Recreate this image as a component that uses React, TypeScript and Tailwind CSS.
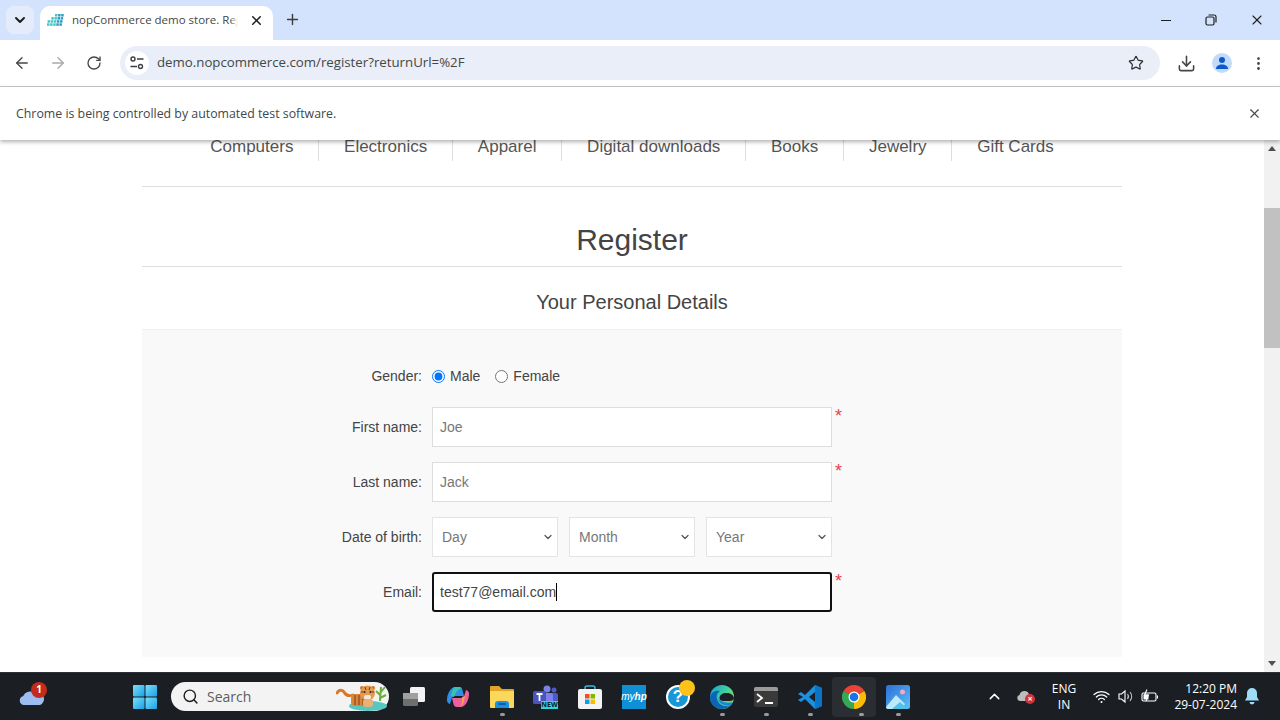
import { ArrowLeft, ArrowRight, ChevronDown, ChevronUp, Download, MoreVertical, Plus, RotateCw, Search, Star, X } from "lucide-react";

const NAV_ITEMS = ["Computers", "Electronics", "Apparel", "Digital downloads", "Books", "Jewelry", "Gift Cards"];

function Favicon() {
  const dots = [];
  for (let row = 0; row < 4; row++) {
    for (let col = 0; col < 5; col++) {
      if (row === 0 && col < 2) continue;
      if (row === 1 && col < 1) continue;
      dots.push(<rect key={`${row}-${col}`} x={col * 3.1 + (3 - row) * 0.6} y={row * 3.1 + 1} width="2.5" height="2.5" fill={col > 2 ? "#2f9cc4" : "#45c6c6"} />);
    }
  }
  return <svg width="17" height="15" viewBox="0 0 17 15">{dots}</svg>;
}

function SiteIcon() {
  return (
    <svg width="16" height="16" viewBox="0 0 16 16" fill="none" stroke="#3c4043" strokeWidth="1.4">
      <circle cx="4" cy="4" r="2" />
      <path d="M8 4h6.5M1.5 11.5H8" />
      <circle cx="11.5" cy="11.5" r="2" />
    </svg>
  );
}

function RestoreIcon() {
  return (
    <svg width="12" height="12" viewBox="0 0 12 12" fill="none" stroke="#1f1f1f" strokeWidth="1.2">
      <rect x="1" y="3" width="8" height="8" rx="1.5" />
      <path d="M3.5 1h5.5a2 2 0 0 1 2 2v5.5" />
    </svg>
  );
}

function ProfileIcon() {
  return (
    <div className="w-5 h-5 rounded-full bg-[#c2dbfb] flex items-center justify-center">
      <svg width="14" height="14" viewBox="0 0 14 14" fill="#0b57d0">
        <circle cx="7" cy="4" r="3" />
        <path d="M1 13c0-3 2.600-4.500 6-4.500s6 1.500 6 4.500z" />
      </svg>
    </div>
  );
}

function WeatherIcon() {
  return (
    <div className="relative w-[26px] h-[18px]">
      <svg width="26" height="18" viewBox="0 0 26 18">
        <path d="M5 17a4.500 4.500 0 0 1-1-8.800A8 8 0 0 1 16 5a6 6 0 0 1 5 12z" fill="#9dbcf0" />
      </svg>
      <div className="absolute -top-[6px] left-[12px] w-[16px] h-[16px] rounded-full bg-[#c42b1c] text-white text-[10px] font-bold flex items-center justify-center font-['Open_Sans',sans-serif]">1</div>
    </div>
  );
}

function WindowsLogo() {
  return (
    <svg width="24" height="24" viewBox="0 0 24 24">
      <defs>
        <linearGradient id="winA" x1="0" y1="0" x2="1" y2="1">
          <stop offset="0" stopColor="#7be0f6" />
          <stop offset="1" stopColor="#1aa0e8" />
        </linearGradient>
      </defs>
      <rect x="0" y="0" width="11.500" height="11.500" rx="1" fill="url(#winA)" />
      <rect x="12.500" y="0" width="11.500" height="11.500" rx="1" fill="url(#winA)" />
      <rect x="0" y="12.500" width="11.500" height="11.500" rx="1" fill="url(#winA)" />
      <rect x="12.500" y="12.500" width="11.500" height="11.500" rx="1" fill="url(#winA)" />
    </svg>
  );
}

function TigerIcon() {
  return (
    <svg width="52" height="28" viewBox="0 0 52 28">
      <ellipse cx="32" cy="23" rx="19" ry="5" fill="#55c8c0" />
      <path d="M1 10c2-4 6-3 7-1s3 5 9 3" fill="none" stroke="#d9772b" strokeWidth="2.800" strokeLinecap="round" />
      <rect x="15" y="11" width="17" height="12" rx="4" fill="#d9853b" />
      <path d="M19 12v10M23 12v10M27 12v10" stroke="#7a3f18" strokeWidth="1" />
      <circle cx="26" cy="5" r="2" fill="#c9742d" />
      <circle cx="37" cy="5" r="2" fill="#c9742d" />
      <circle cx="31.500" cy="10" r="7.500" fill="#e3994f" />
      <path d="M29 4l1 3M34 4l-1 3M25 9h2M36 9h2" stroke="#6b3a18" strokeWidth="1" />
      <rect x="28" y="12" width="7" height="4.500" rx="2" fill="#f6e7d3" />
      <circle cx="28.500" cy="9" r="1" fill="#222" />
      <circle cx="34.500" cy="9" r="1" fill="#222" />
      <rect x="27" y="16" width="10" height="8" rx="3" fill="#e9b077" />
      <path d="M44 18c0-5 1-10 1-14M44 12l-4-4M45 9l4-5M44 15l6-3" stroke="#6fae3c" strokeWidth="2" fill="none" />
    </svg>
  );
}

function TaskViewIcon() {
  return (
    <svg width="24" height="24" viewBox="0 0 24 24">
      <rect x="8" y="2" width="15" height="15" rx="1.500" fill="#f2f2f2" />
      <rect x="1" y="8" width="15" height="13" rx="1.500" fill="#6f6f6f" />
      <rect x="1" y="8" width="15" height="6" fill="#a0a0a0" />
    </svg>
  );
}

function CopilotIcon() {
  return (
    <svg width="24" height="24" viewBox="0 0 24 24">
      <path d="M9 2h4c2 0 3 1 3.500 3L18 11H9c-2 0-3 1-3.500 3l-1.500 5c-2-.500-3-2-3-4 0-5 3-13 8.500-13z" fill="#2f8fe8" />
      <path d="M9 2h4c1 0 2 .300 2.800 1.200C12 4 10 7 8 12L5 11c1-4 2-9 4-9z" fill="#37c4a8" />
      <path d="M15 22h-4c-2 0-3-1-3.500-3L6 13h9c2 0 3-1 3.500-3l1.500-5c2 .500 3 2 3 4 0 5-3 13-8.500 13z" fill="#ec5fa0" />
      <path d="M16 12l3-1-1 5c-.500 2-2 5-4 6 2-2 2-7 2-10z" fill="#f5a14a" />
    </svg>
  );
}

function ExplorerIcon() {
  return (
    <svg width="24" height="24" viewBox="0 0 24 24">
      <path d="M0 2a1 1 0 0 1 1-1h8l3 3h11a1 1 0 0 1 1 1v4H0z" fill="#e0a526" />
      <path d="M0 6h24v16a1 1 0 0 1-1 1H1a1 1 0 0 1-1-1z" fill="#fbd75b" />
      <path d="M5 23v-4a3 3 0 0 1 3-3h8a3 3 0 0 1 3 3v4z" fill="#1c8fe0" />
      <rect x="8" y="18" width="8" height="2" rx="1" fill="#0a5ea8" />
    </svg>
  );
}

function TeamsIcon() {
  return (
    <div className="relative w-[26px] h-[24px]">
      <svg width="26" height="24" viewBox="0 0 26 24">
        <circle cx="14" cy="4" r="3.500" fill="#7b83eb" />
        <circle cx="21" cy="5" r="2.500" fill="#5059c9" />
        <rect x="14" y="8" width="11" height="11" rx="2" fill="#5059c9" />
        <rect x="10" y="8" width="10" height="12" rx="2" fill="#7b83eb" />
        <rect x="0" y="6" width="13" height="13" rx="1.500" fill="#4b53bc" />
        <path d="M3.500 9h6M6.500 9v7" stroke="#fff" strokeWidth="1.800" />
      </svg>
      <div className="absolute left-[8px] top-[16px] w-[17px] h-[8px] bg-[#33d6d6] text-[#10202a] text-[7px] leading-[8px] font-bold text-center font-['Open_Sans',sans-serif]">NEW</div>
    </div>
  );
}

function StoreIcon() {
  return (
    <svg width="24" height="24" viewBox="0 0 24 24">
      <path d="M7 5V3a2 2 0 0 1 2-2h6a2 2 0 0 1 2 2v2" fill="none" stroke="#3db5d8" strokeWidth="1.500" />
      <rect x="0" y="4" width="24" height="20" rx="2" fill="#f3f3f3" />
      <rect x="7" y="9" width="4.500" height="4.500" fill="#f25022" />
      <rect x="12.500" y="9" width="4.500" height="4.500" fill="#7fba00" />
      <rect x="7" y="14.500" width="4.500" height="4.500" fill="#00a4ef" />
      <rect x="12.500" y="14.500" width="4.500" height="4.500" fill="#ffb900" />
    </svg>
  );
}

function MyHpIcon() {
  return (
    <div className="w-[24px] h-[24px] bg-[#0f8fd6] flex items-center justify-center text-white text-[10px] italic font-['Liberation_Sans',sans-serif]">
      my<span className="font-bold">hp</span>
    </div>
  );
}

function HelpIcon() {
  return (
    <div className="relative w-[24px] h-[24px]">
      <div className="w-[24px] h-[24px] rounded-full bg-[#1797d8] border-2 border-white flex items-center justify-center text-white text-[17px] font-bold font-['Liberation_Sans',sans-serif]">?</div>
      <div className="absolute -top-[5px] left-[13px] w-[16px] h-[16px] rounded-full bg-[#fcc21b]" />
    </div>
  );
}

function EdgeIcon() {
  return (
    <svg width="24" height="24" viewBox="0 0 24 24">
      <defs>
        <linearGradient id="edgeA" x1="0" y1="0" x2="1" y2="0.6">
          <stop offset="0" stopColor="#1a9fd0" />
          <stop offset="0.6" stopColor="#3fd0a0" />
          <stop offset="1" stopColor="#86e05a" />
        </linearGradient>
      </defs>
      <circle cx="12" cy="12" r="12" fill="url(#edgeA)" />
      <path d="M0 12C1 7 6 5 10 6c-3 2-4 5-3 8 1 5 6 8 13 7a12 12 0 0 1-8 3A12 12 0 0 1 0 12z" fill="#0c63b8" />
      <path d="M9.500 13c0-3 3-5 7-5 4 0 7 2 7.500 5 0 2-2 3-4 3h-7c-2 0-3.500-1-3.500-3z" fill="#1b1f24" />
      <path d="M8 14c1 4 5 7 12 7 1-1 2-3 3-4-3 1-9 1-12-1-2-1-2-2-3-2z" fill="#1a86d8" />
    </svg>
  );
}

function TerminalIcon() {
  return (
    <div className="w-[24px] h-[20px] bg-[#3a3a3a] rounded-[2px] flex flex-col">
      <div className="h-[4px] bg-[#9a9a9a] rounded-t-[2px]" />
      <svg width="24" height="16" viewBox="0 0 24 16" fill="none" stroke="#fff" strokeWidth="1.800">
        <path d="M3 3l5 4-5 4M11 12h8" />
      </svg>
    </div>
  );
}

function VsCodeIcon() {
  return (
    <svg width="24" height="24" viewBox="0 0 24 24">
      <path d="M17 0l7 3v18l-7 3-10-10-4 3-3-2 5-3-5-3 3-2 4 3z" fill="#1e8fe0" />
      <path d="M17 0l7 3v18l-7 3z" fill="#0a74c9" />
      <path d="M17 7l-6 5 6 5z" fill="#1b1f24" />
    </svg>
  );
}

function ChromeIcon() {
  return (
    <svg width="24" height="24" viewBox="0 0 24 24">
      <path d="M12 12L1.600 6A12 12 0 0 1 22.400 6z" fill="#ea4335" />
      <path d="M12 12L22.400 6A12 12 0 0 1 12 24z" fill="#fbbc04" />
      <path d="M12 12L12 24A12 12 0 0 1 1.600 6z" fill="#34a853" />
      <circle cx="12" cy="12" r="5.500" fill="#fff" />
      <circle cx="12" cy="12" r="4.300" fill="#1a73e8" />
    </svg>
  );
}

function PhotosIcon() {
  return (
    <svg width="24" height="24" viewBox="0 0 24 24">
      <defs>
        <linearGradient id="photosA" x1="0" y1="0" x2="1" y2="1">
          <stop offset="0" stopColor="#2b6fd8" />
          <stop offset="1" stopColor="#5fc0f5" />
        </linearGradient>
      </defs>
      <rect width="24" height="24" rx="2.500" fill="url(#photosA)" />
      <circle cx="16.500" cy="7" r="2.500" fill="#f4a6c8" />
      <path d="M0 22L10 10l9 9-3 5H2a2 2 0 0 1-2-2z" fill="#bdeafc" />
      <path d="M6 24l8-7 8 7z" fill="#4fc3e8" />
    </svg>
  );
}

function WifiIcon() {
  return (
    <svg width="17" height="15" viewBox="0 0 17 15" fill="none" stroke="#fff" strokeWidth="1.200" strokeLinecap="round">
      <path d="M1 5.500a11 11 0 0 1 15 0M3.300 8a7.500 7.500 0 0 1 10.400 0M5.600 10.500a4 4 0 0 1 5.800 0" />
      <circle cx="8.500" cy="13" r="1" fill="#fff" stroke="none" />
    </svg>
  );
}

function SpeakerIcon() {
  return (
    <svg width="16" height="15" viewBox="0 0 16 15" fill="none" stroke="#fff" strokeWidth="1.100">
      <path d="M1 5h2.500L7 2v11L3.500 10H1z" />
      <path d="M9.500 5a4 4 0 0 1 0 5M12 3a7 7 0 0 1 0 9" stroke="#c9c9c9" />
    </svg>
  );
}

function BatteryIcon() {
  return (
    <svg width="18" height="15" viewBox="0 0 18 15" fill="none" stroke="#fff" strokeWidth="1.100">
      <rect x="1" y="4" width="14" height="8" rx="1.500" />
      <path d="M16.500 6.500v3" />
      <path d="M2.500 5.500h5v5h-5z" fill="#fff" stroke="none" />
      <path d="M6 0.500L3.500 6h4L5 12" stroke="#fff" />
    </svg>
  );
}

function BellIcon() {
  return (
    <svg width="14" height="17" viewBox="0 0 14 17" fill="#9fdcf7">
      <path d="M7 0a5 5 0 0 1 5 5v4l2 3.500H0L2 9V5a5 5 0 0 1 5-5z" />
      <path d="M4.500 14a2.500 2.500 0 0 0 5 0z" />
    </svg>
  );
}

function OneDriveIcon() {
  return (
    <div className="relative w-[18px] h-[14px]">
      <svg width="16" height="11" viewBox="0 0 16 11">
        <path d="M3 11a3 3 0 0 1-.500-5.900A5 5 0 0 1 12 4a3.500 3.500 0 0 1 0 7z" fill="#bdbdbd" />
      </svg>
      <div className="absolute left-[8px] top-[4px] w-[10px] h-[10px] rounded-full bg-[#d13438] text-white text-[9px] leading-[10px] text-center font-bold">×</div>
    </div>
  );
}

function ScrollArrow({ down }: { down?: boolean }) {
  return (
    <svg width="8" height="5" viewBox="0 0 8 5" fill="#505050">
      <path d={down ? "M0 0h8L4 5z" : "M4 0l4 5H0z"} />
    </svg>
  );
}

function TaskCell({ children, dot, active }: { children: React.ReactNode; dot?: boolean; active?: boolean }) {
  return (
    <div className={`relative w-[44px] h-[40px] flex items-center justify-center rounded-[4px] ${active ? "bg-[#2a2e33]" : ""}`}>
      {children}
      {dot && <div className={`absolute bottom-[1px] h-[3px] w-[5px] rounded-full bg-[#9a9a9a] ${active ? "left-[27px]" : "left-[20px]"}`} />}
    </div>
  );
}

function Field({ label, value, required }: { label: string; value: string; required?: boolean }) {
  return (
    <div className="flex items-center gap-[10px] mb-[15px] h-[40px]">
      <label className="w-[280px] text-right text-sm text-[#444]">{label}</label>
      <input readOnly value={value} className="w-[400px] h-[40px] pl-[7px] pr-2 border border-[#dddddd] bg-white text-sm text-[#777] outline-none" />
      {required && <span className="self-start -ml-[7px] -mt-[1px] text-[18px] leading-[20px] text-[#e4434b]">*</span>}
    </div>
  );
}

export default function App() {
  return (
    <div className="w-[1280px] h-[720px] overflow-hidden flex flex-col bg-white font-['Liberation_Sans',sans-serif]">
      {/* browser chrome */}
      <div className="h-[40px] bg-[#d3e3fd] flex items-end relative font-['Open_Sans',sans-serif]">
        <div className="absolute left-[6px] top-[6px] w-[28px] h-[28px] rounded-lg bg-[#e4ecfb] flex items-center justify-center">
          <ChevronDown size={16} strokeWidth={3} className="text-[#1f1f1f]" />
        </div>
        <div className="ml-[40px] w-[233px] h-[34px] rounded-t-[10px] bg-white flex items-center pl-[7px] pb-[6px]">
          <Favicon />
          <div className="relative ml-[8px] w-[166px] overflow-hidden whitespace-nowrap text-[11.5px] text-[#444746]">
            nopCommerce demo store. Reg
            <div className="absolute right-0 top-0 bottom-0 w-[8px] bg-gradient-to-r from-transparent to-white" />
          </div>
          <X size={15} strokeWidth={2.5} className="ml-[11px] text-[#1f1f1f]" />
        </div>
        <Plus size={17} strokeWidth={2} className="ml-[11px] mb-[12px] text-[#3c3c3c]" />
        <div className="ml-auto h-[40px] flex items-center text-[#1f1f1f]">
          <div className="w-[45px] flex justify-center"><div className="w-[10px] h-[1px] bg-[#1f1f1f]" /></div>
          <div className="w-[46px] flex justify-center"><RestoreIcon /></div>
          <div className="w-[46px] flex justify-center"><X size={16} strokeWidth={1.6} /></div>
        </div>
      </div>
      <div className="h-[47px] bg-white rounded-t-[10px] border-b border-[#c7c7c7] flex items-center px-[4px] font-['Open_Sans',sans-serif]">
        <div className="w-[36px] flex justify-center"><ArrowLeft size={18} strokeWidth={1.8} className="text-[#474747]" /></div>
        <div className="w-[36px] flex justify-center"><ArrowRight size={18} strokeWidth={1.8} className="text-[#a9a9a9]" /></div>
        <div className="w-[36px] flex justify-center"><RotateCw size={16} strokeWidth={2} className="text-[#474747]" /></div>
        <div className="ml-[8px] w-[1040px] h-[34px] rounded-full bg-[#e9eef8] flex items-center pl-[5px] pr-[16px]">
          <div className="w-[24px] h-[24px] rounded-full bg-white flex items-center justify-center"><SiteIcon /></div>
          <span className="ml-[8px] text-[13.25px] text-[#444746]">demo.nopcommerce.com/register?returnUrl=%2F</span>
          <Star size={16} strokeWidth={1.8} className="ml-auto text-[#303030]" />
        </div>
        <div className="ml-[8px] w-[36px] flex justify-center"><Download size={19} strokeWidth={2} className="text-[#474747]" /></div>
        <div className="w-[36px] flex justify-center"><ProfileIcon /></div>
        <div className="w-[36px] flex justify-center"><MoreVertical size={17} strokeWidth={2} className="text-[#474747]" /></div>
      </div>
      <div className="relative z-10 h-[53px] bg-white shadow-[0_2px_4px_rgba(0,0,0,0.3)] flex items-center justify-between pl-[16px] pr-[18px] font-['Open_Sans',sans-serif]">
        <span className="pt-[2px] text-[12.35px] text-[#444746]">Chrome is being controlled by automated test software.</span>
        <X size={15} strokeWidth={1.8} className="text-[#474747]" />
      </div>

      {/* page */}
      <div className="h-[532px] flex overflow-hidden">
        <div className="flex-1 flex flex-col items-center">
          <div className="w-[980px] -mt-[4px] flex flex-col">
            <ul className="h-[51px] border-b border-[#dddddd] flex justify-center items-start">
              {NAV_ITEMS.map((item, i) => (
                <li key={item} className={`px-[24.83px] h-[25px] leading-[22px] text-[17px] text-[#555] ${i < NAV_ITEMS.length - 1 ? "border-r border-[#dddddd]" : ""}`}>{item}</li>
              ))}
            </ul>
            <h1 className="h-[80px] pt-[33px] text-center text-[30px] leading-[40px] text-[#444] border-b border-[#dddddd]">Register</h1>
            <h2 className="h-[63px] pt-[21px] text-center text-xl leading-[28px] text-[#444] border-b border-[#f0f0f0]">Your Personal Details</h2>
            <form className="h-[327px] bg-[#f9f9f9]">
              <div className="flex items-center gap-[10px] h-[77px] pt-[15px]">
                <label className="w-[280px] text-right text-sm text-[#444]">Gender:</label>
                <input type="radio" name="gender" defaultChecked className="w-[13px] h-[13px] m-0" />
                <span className="-ml-[5px] text-sm text-[#444]">Male</span>
                <input type="radio" name="gender" className="ml-[5px] w-[13px] h-[13px] m-0" />
                <span className="-ml-[5px] text-sm text-[#444]">Female</span>
              </div>
              <Field label="First name:" value="Joe" required />
              <Field label="Last name:" value="Jack" required />
              <div className="flex items-center gap-[10px] mb-[15px] h-[40px]">
                <label className="w-[280px] text-right text-sm text-[#444]">Date of birth:</label>
                <div className="w-[400px] flex justify-between">
                  {["Day", "Month", "Year"].map((v) => (
                    <div key={v} className="relative w-[126px] h-[40px]">
                      <select defaultValue={v} className="appearance-none w-full h-full pl-[9px] border border-[#e4e4e4] bg-white text-sm text-[#777] outline-none">
                        <option>{v}</option>
                      </select>
                      <ChevronDown size={12} strokeWidth={2.5} className="absolute right-[4px] top-[14px] text-[#555]" />
                    </div>
                  ))}
                </div>
              </div>
              <div className="flex items-center gap-[10px] h-[40px]">
                <label className="w-[280px] text-right text-sm text-[#444]">Email:</label>
                <div className="relative">
                  <input readOnly value="test77@email.com" className="w-[400px] h-[40px] px-[6px] border-2 border-[#101010] rounded-[3px] bg-white text-sm text-[#444] outline-none" />
                  <div className="absolute left-[124px] top-[11px] w-[1px] h-[18px] bg-black" />
                </div>
                <span className="self-start -ml-[7px] -mt-[1px] text-[18px] leading-[20px] text-[#e4434b]">*</span>
              </div>
            </form>
          </div>
        </div>
        <div className="w-[16px] bg-[#f1f1f1] flex flex-col items-center relative">
          <div className="absolute top-[6px]"><ScrollArrow /></div>
          <div className="mt-[68px] w-full h-[140px] bg-[#c1c1c1]" />
          <div className="absolute bottom-[6px]"><ScrollArrow down /></div>
        </div>
      </div>

      {/* taskbar */}
      <div className="h-[48px] bg-[#1b1f24] border-t border-[#2d3136] flex items-center text-white font-['Open_Sans',sans-serif]">
        <div className="ml-[19px] w-[26px]"><WeatherIcon /></div>
        <div className="ml-[88px] w-[24px] flex"><WindowsLogo /></div>
        <div className="ml-[14px] w-[218px] h-[29px] rounded-full bg-[#f3f3f3] flex items-center pl-[11px] pr-[1px]">
          <Search size={17} strokeWidth={2} className="text-[#1f1f1f]" />
          <span className="ml-[8px] text-sm text-[#5d5d5d]">Search</span>
          <div className="ml-auto flex"><TigerIcon /></div>
        </div>
        <div className="ml-[3px] flex items-center">
          <TaskCell><TaskViewIcon /></TaskCell>
          <TaskCell><CopilotIcon /></TaskCell>
          <TaskCell dot><ExplorerIcon /></TaskCell>
          <TaskCell><TeamsIcon /></TaskCell>
          <TaskCell><StoreIcon /></TaskCell>
          <TaskCell><MyHpIcon /></TaskCell>
          <TaskCell><HelpIcon /></TaskCell>
          <TaskCell dot><EdgeIcon /></TaskCell>
          <TaskCell dot><TerminalIcon /></TaskCell>
          <TaskCell dot><VsCodeIcon /></TaskCell>
          <TaskCell dot active><ChromeIcon /></TaskCell>
          <TaskCell dot><PhotosIcon /></TaskCell>
        </div>
        <ChevronUp size={17} strokeWidth={2} className="ml-[66px]" />
        <div className="ml-[14px]"><OneDriveIcon /></div>
        <div className="ml-[16px] w-[26px] text-center text-xs leading-[16px]">ENG<br />IN</div>
        <div className="ml-[16px]"><WifiIcon /></div>
        <div className="ml-[8px]"><SpeakerIcon /></div>
        <div className="ml-[7px]"><BatteryIcon /></div>
        <div className="ml-[16px] w-[62px] text-right text-xs leading-[16px] whitespace-nowrap flex flex-col items-end">
          <span>12:20 PM</span>
          <span>29-07-2024</span>
        </div>
        <div className="ml-[8px]"><BellIcon /></div>
      </div>
    </div>
  );
}
